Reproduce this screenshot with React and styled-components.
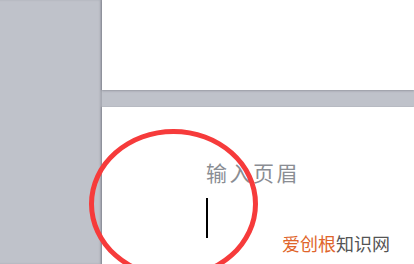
import React from "react";
import styled, { createGlobalStyle } from "styled-components";

const GlobalStyle = createGlobalStyle`
    html, body {
        margin: 0;
        padding: 0;
        background: #bfc2ca;
        overflow: hidden;
    }
    body {
        font-family: "Noto Sans CJK SC", "Liberation Sans", sans-serif;
    }
`;

const Workspace = styled.div`
    position: relative;
    width: 414px;
    height: 264px;
    display: flex;
    background: #bfc2ca;
    overflow: hidden;
`;

const SidePane = styled.div`
    width: 102px;
    flex-shrink: 0;
    box-shadow: inset -2px 0 2px rgba(120, 124, 134, 0.35);
`;

const PageColumn = styled.div`
    flex: 1;
    display: flex;
    flex-direction: column;
    gap: 17px;
`;

const Page = styled.div`
    position: relative;
    background: #ffffff;
    height: ${(p) => p.$height}px;
    flex-shrink: 0;
    box-shadow: 0 1px 2px rgba(110, 114, 124, 0.45), -1px 0 1px rgba(110, 114, 124, 0.3);
`;

const HeaderArea = styled.div`
    padding: 52px 0 0 104px;
    display: flex;
    flex-direction: column;
    gap: 13px;
`;

const HeaderHint = styled.div`
    font-size: 21px;
    line-height: 26px;
    color: #8a8d93;
    letter-spacing: 2.5px;
`;

const Cursor = styled.div`
    width: 2px;
    height: 40px;
    background: #000;
`;

const Mark = styled.div`
    position: absolute;
    left: 89px;
    top: 129px;
    width: 159px;
    height: 140px;
    border: 5px solid #f63b3b;
    border-radius: 50%;
    pointer-events: none;
`;

const Watermark = styled.div`
    position: absolute;
    left: 282px;
    top: 231px;
    font-size: 18px;
    line-height: 24px;
    white-space: nowrap;
`;

const Brand = styled.span`
    color: ${(p) => p.$color};
`;

export default function App() {
    return (
        <>
            <GlobalStyle />
            <Workspace>
                <SidePane />
                <PageColumn>
                    <Page $height={90} />
                    <Page $height={200}>
                        <HeaderArea>
                            <HeaderHint>输入页眉</HeaderHint>
                            <Cursor />
                        </HeaderArea>
                    </Page>
                </PageColumn>
                <Mark />
                <Watermark>
                    <Brand $color="#e0652b">爱创根</Brand>
                    <Brand $color="#555555">知识网</Brand>
                </Watermark>
            </Workspace>
        </>
    );
}
